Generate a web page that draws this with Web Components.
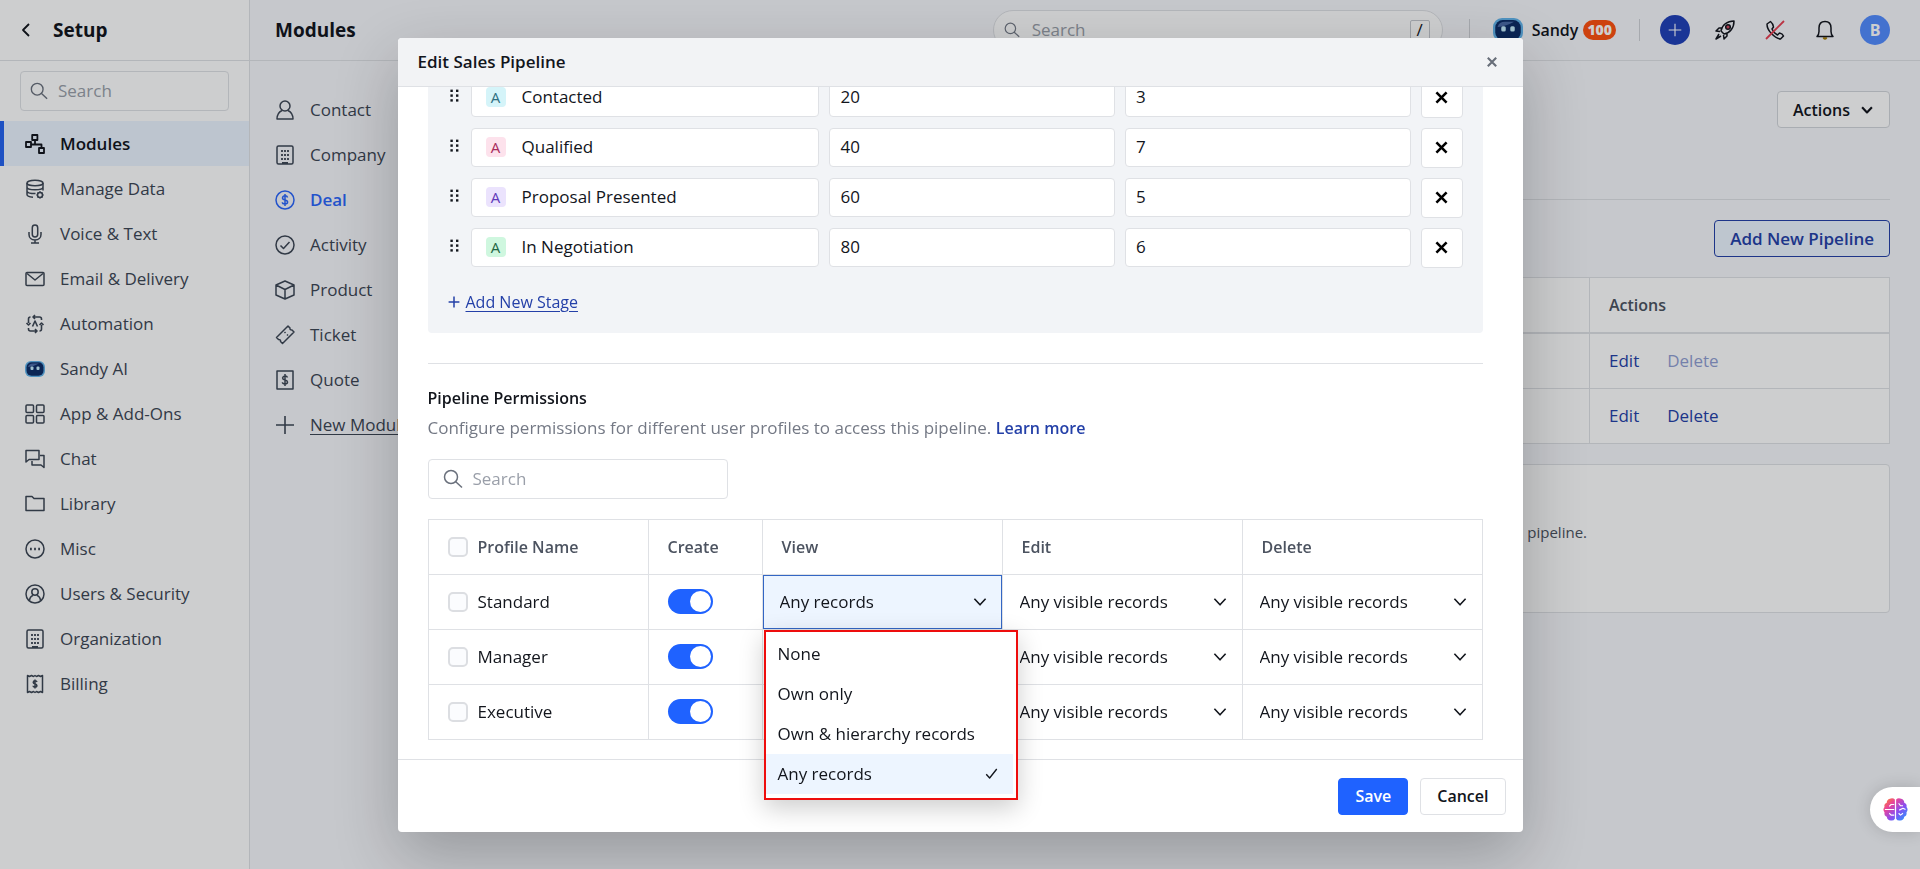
<!DOCTYPE html>
<html lang="en">
<head>
<meta charset="utf-8">
<meta name="viewport" content="width=device-width, initial-scale=1">
<title>Setup - Modules</title>
<style>
    :root {
        --line: #dfe1e5;
        --text: #12151c;
        --muted: #3d4654;
        --head: #4c5360;
        --hint: #9a9fa9;
        --link: #2440a8;
        --primary: #1f62ff;
        --tint: #edf5ff;
        --panel: #f2f4f7;
    }
    body {
        margin: 0;
        min-height: 100vh;
        overflow: hidden;
        font: 17px/24px "Open Sans", "Noto Sans", sans-serif;
        color: var(--text);
        background: #f7f8fc;
    }
</style>
</head>
<body>
<x-app>
    <x-sidebar slot="sidebar"></x-sidebar>
    <x-topbar slot="topbar" heading="Modules"></x-topbar>
    <x-modules slot="modules"></x-modules>
    <x-pipelines></x-pipelines>
</x-app>
<x-modal heading="Edit Sales Pipeline">
    <x-stages></x-stages>
    <x-permissions></x-permissions>
</x-modal>
<x-assistant></x-assistant>

<script>
const icons = {
    back: `<path d="M13 4 7 10l6 6" stroke-width="1.8"/>`,
    search: `<circle cx="8" cy="8" r="6.5"/><path d="m12.5 12.5 6.5 6"/>`,
    modules: `<path d="M7.2 1h5.2v5H7.2zM1 8h5v5H1zM14 14h5v5h-5zM10 6v4.5M6 10.5h10.5V14" stroke-width="1.8"/>`,
    data: `<ellipse cx="10" cy="4" rx="8" ry="2.8"/><path d="M2 4v11.5c0 1.5 2.5 2.5 6 2.8M18 4v7.5M2 8c0 3.7 16 3.7 16 0M2 12c0 1.8 4 2.6 8.5 2.6"/><circle cx="15" cy="16" r="2.5"/><path d="M15 12.3v1M15 18.5v1M11.5 16h1M17.5 16h1M12.5 13.5l.8.8M17.5 18.5l-.8-.8M17.5 13.5l-.8.8M12.5 18.5l.8-.8"/>`,
    mic: `<rect x="7.3" y="1" width="5.4" height="12" rx="2.7"/><path d="M4 8v2.5c0 3.3 2.5 5.5 6 5.5s6-2.2 6-5.5V8M10 16v3M6 19h8"/>`,
    mail: `<rect x="1" y="3.5" width="18" height="13" rx="1"/><path d="m2 4.5 8 6.5 8-6.5"/>`,
    automation: `<path d="M8 3h6.5q2 0 2 2v1M10 1 8 3l2 2M3.5 9V5q0-2 2-2M1.5 9l2 2 2-2M12 17H5.5q-2 0-2-2v-1M10 15l2 2-2 2M16.5 11v4q0 2-2 2M14.5 11l2-2 2 2M7.5 12.5 10 7l2.5 5.5" stroke-width="1.6"/>`,
    apps: `<rect x="1" y="1" width="7.5" height="7.5" rx="1"/><rect x="11.5" y="1" width="7.5" height="7.5" rx="1"/><rect x="1" y="11.5" width="7.5" height="7.5" rx="1"/><rect x="11.5" y="11.5" width="7.5" height="7.5" rx="1"/>`,
    chat: `<path d="M1 1.5h13v9H4L1 13zM15 6.5h4v12l-3-2.5H7v-4"/>`,
    folder: `<path d="M1 16.5v-14h6l2 2h10v12z"/>`,
    misc: `<circle cx="10" cy="10" r="9"/><path d="M5 10h1.8M9.1 10h1.8M13.2 10H15" stroke-width="2.4"/>`,
    users: `<circle cx="10" cy="10" r="9"/><circle cx="10" cy="8" r="3.2"/><path d="M4.5 16.5c.3-3 1.7-4.5 3.5-5M15.5 16.5c-.3-3-1.7-4.5-3.5-5"/>`,
    building: `<rect x="2" y="1" width="16" height="18" rx="1.5"/><path d="M7 18h6" stroke-width="2"/><path d="M7 5v10M10 5v10M13 5v10" stroke-width="1.8" stroke-dasharray="2 2"/>`,
    bill: `<path d="M2.5 1.5v17l2-1 2 1 2-1 1.5 1 1.5-1 2 1 2-1 2 1v-17l-2 1-2-1-2 1-1.5-1-1.5 1-2-1-2 1z"/><path d="M12 8q-.4-1.300-2-1.300T8.200 8.300q0 1.200 1.800 1.600t1.900 1.700q0 1.600-1.900 1.600T8 11.800M10 5.500v9"/>`,
    contact: `<circle cx="10" cy="6" r="5"/><path d="M7 10.500c-3 1.500-5 4-5 8.500h16c0-4.500-2-7-5-8.500"/>`,
    deal: `<circle cx="10" cy="10" r="9"/><path d="M12.6 7.5q-.5-1.7-2.6-1.7T7.5 7.9q0 1.5 2.5 2t2.6 2.2q0 2-2.600 2t-2.700-1.800M10 4v12"/>`,
    activity: `<circle cx="10" cy="10" r="9"/><path d="m5.5 10.5 3 3 6-6.5"/>`,
    product: `<path d="m10 1 9 4v10l-9 4-9-4V5zM1 5l9 4.5L19 5M10 9.5V19"/>`,
    ticket: `<path d="m13 1 2 2q-.5 2 2 2l2 2L7.5 18.5l-2-2q.5-2-2-2l-2-2zM9.5 7l1 1M12 9.5l1 1M14 11.5l.5.5"/>`,
    quote: `<rect x="2" y="1" width="16" height="18"/><path d="M12.5 7.5Q12 6 10 6T7.6 8q0 1.4 2.4 1.9t2.5 2.1q0 2-2.5 2t-2.6-1.7M10 4v12"/>`,
    plus: `<path d="M10 1v18M1 10h18" style="stroke-width:var(--weight, 1.6)"/>`,
    rocket: `<path d="M6 11c1-6 6-10 13-10 0 7-4 12-10 13zM7 8H4l-3 3 4 .5M12 13v3l-3 3-.5-4M4 14l-3 5 5-3M6 11l3 3"/><circle cx="13" cy="7" r="2.3" fill="#d0455c"/>`,
    phone: `<path d="M5.5 1.5 2 4q0 5 4 9 5 5.5 9.5 6l3-3q-1-2.5-4-3l-2 2q-4-2-5.5-6l1.5-2Q8 3.5 5.5 1.5z"/><path d="M19 1 1 19" stroke="#e83e50" stroke-width="1.8"/>`,
    bell: `<path d="M8.5 18q1.5 2 3 0z" fill="#e8b923" stroke="#a87d00"/><path d="M2 16.5h16q-2-2-2-5V8c0-4-2-6.5-6-6.5S4 4 4 8v3.5q0 3-2 5z"/>`,
    close: `<path d="m4 4 12 12M16 4 4 16" stroke-width="3"/>`,
    chevron: `<path d="m3 6 7 7.5L17 6" style="stroke-width:var(--weight, 2)"/>`,
    check: `<path d="m3 11 4.5 5L17 4" stroke-width="1.8"/>`,
    drag: `<g fill="currentColor" stroke="none"><rect x="3" y="2" width="3" height="3"/><rect x="10" y="2" width="3" height="3"/><rect x="3" y="8" width="3" height="3"/><rect x="10" y="8" width="3" height="3"/><rect x="3" y="14" width="3" height="3"/><rect x="10" y="14" width="3" height="3"/></g>`,
    bot: `<g stroke="none"><rect y="2" width="20" height="16" rx="6" fill="#63b5ec"/><rect x="1.5" y="3.3" width="17" height="13.4" rx="5" fill="#0d2c66"/><path d="M3 8q1-3.500 5-3.500h6q-5 3-11 3.500z" fill="#4d6ca8"/><rect x="5.5" y="7.5" width="3" height="3.5" rx="1" fill="#c9f0ff"/><rect x="11.5" y="7.5" width="3" height="3.5" rx="1" fill="#c9f0ff"/></g>`,
    brain: `<defs><linearGradient id="g" x1="0" y1="0" x2="1" y2="1"><stop offset="0" stop-color="#ff8a1f"/><stop offset=".3" stop-color="#e8449b"/><stop offset=".6" stop-color="#8a4df0"/><stop offset="1" stop-color="#1aa0ff"/></linearGradient></defs><path d="M9.5 2Q8 .3 5.5 1.3 3 2 3 4.5.5 5.5 1.2 8-.5 10 1.2 12.2.7 15 3 15.8q.5 3 3.2 3 2.3.4 3.3-1.400zM10.5 2q1.5-1.7 4-.7Q17 2 17 4.5q2.5 1 1.8 3.5 1.7 2 0 4.2.5 2.800-1.800 3.600-.5 3-3.200 3-2.300.4-3.300-1.400z" fill="url(#g)" stroke="none"/><path d="M9 6H6.500L5 7.500M1.500 10H9M5 13l1.500 1.500H9M12.500 5 14 7h2M13 10.500l3-1.500 2 1M12.500 13l1.500 1.500 2-1.500" stroke="#fff" stroke-width=".9"/>`
};

function attach(el, html) {
    el.attachShadow({ mode: "open" });
    const $template = document.createElement("template");
    $template.innerHTML = html;
    el.shadowRoot.appendChild($template.content.cloneNode(true));
}

class Icon extends HTMLElement {
    connectedCallback() {
        if (this.shadowRoot) return;
        attach(this, `
<style>
    :host {
        display: block;
        flex: none;
        width: var(--size, 20px);
        height: var(--size, 20px);
    }
    svg {
        display: block;
        width: 100%;
        height: 100%;
        overflow: visible;
    }
</style>
<svg viewBox="0 0 20 20" fill="none" stroke="currentColor" stroke-width="1.5" stroke-linejoin="round" aria-hidden="true">${icons[this.getAttribute("name")]}</svg>`);
    }
}
window.customElements.define("x-icon", Icon);

class App extends HTMLElement {
    constructor() {
        super();
        attach(this, `
<style>
    :host {
        display: grid;
        grid-template-columns: 250px 200px 1fr;
        grid-template-rows: 61px 1fr;
        min-height: 100vh;
    }
    ::slotted([slot="sidebar"]) {
        grid-row: 1 / 3;
    }
    ::slotted([slot="topbar"]) {
        grid-column: 2 / 4;
    }
</style>
<slot name="sidebar"></slot>
<slot name="topbar"></slot>
<slot name="modules"></slot>
<slot></slot>`);
    }
}
window.customElements.define("x-app", App);

class NavItem extends HTMLElement {
    connectedCallback() {
        if (this.shadowRoot) return;
        attach(this, `
<style>
    :host {
        display: block;
    }
    a {
        display: flex;
        align-items: center;
        gap: 15px;
        height: 45px;
        padding: 0 25px;
        color: var(--muted);
        text-decoration: none;
        white-space: nowrap;
    }
    :host([active]) a {
        color: var(--text);
        font-weight: 600;
        background: #ebf4ff;
        box-shadow: inset 4px 0 #2563f0;
    }
    :host([current]) a {
        color: #2b66fa;
        font-weight: 600;
    }
    :host([underline]) span {
        text-decoration: underline;
        text-underline-offset: 3px;
    }
</style>
<a href="#"><x-icon name="${this.getAttribute("icon")}"></x-icon><span><slot></slot></span></a>`);
    }
}
window.customElements.define("x-nav-item", NavItem);

class Sidebar extends HTMLElement {
    constructor() {
        super();
        attach(this, `
<style>
    :host {
        display: block;
        box-sizing: border-box;
        background: #fff;
        border-right: 1px solid var(--line);
    }
    header {
        display: flex;
        align-items: center;
        gap: 17px;
        box-sizing: border-box;
        height: 61px;
        padding: 0 16px;
        border-bottom: 1px solid var(--line);
    }
    header a {
        color: inherit;
    }
    h1 {
        margin: 0;
        font-size: 19px;
        font-weight: 700;
    }
    .search {
        display: flex;
        align-items: center;
        gap: 10px;
        height: 38px;
        margin: 10px 20px;
        padding: 0 9px;
        border: 1px solid var(--line);
        border-radius: 4px;
        color: #6a707c;
        --size: 18px;
    }
    input {
        min-width: 0;
        flex: 1;
        border: 0;
        padding: 0;
        outline: 0;
        font: inherit;
        background: none;
    }
    input::placeholder {
        color: var(--hint);
    }
</style>
<header><a href="#" aria-label="Back"><x-icon name="back"></x-icon></a><h1>Setup</h1></header>
<label class="search"><x-icon name="search"></x-icon><input type="text" placeholder="Search" aria-label="Search setup"></label>
<nav>
    <x-nav-item icon="modules" active>Modules</x-nav-item>
    <x-nav-item icon="data">Manage Data</x-nav-item>
    <x-nav-item icon="mic">Voice &amp; Text</x-nav-item>
    <x-nav-item icon="mail">Email &amp; Delivery</x-nav-item>
    <x-nav-item icon="automation">Automation</x-nav-item>
    <x-nav-item icon="bot">Sandy AI</x-nav-item>
    <x-nav-item icon="apps">App &amp; Add-Ons</x-nav-item>
    <x-nav-item icon="chat">Chat</x-nav-item>
    <x-nav-item icon="folder">Library</x-nav-item>
    <x-nav-item icon="misc">Misc</x-nav-item>
    <x-nav-item icon="users">Users &amp; Security</x-nav-item>
    <x-nav-item icon="building">Organization</x-nav-item>
    <x-nav-item icon="bill">Billing</x-nav-item>
</nav>`);
    }
}
window.customElements.define("x-sidebar", Sidebar);

class Modules extends HTMLElement {
    constructor() {
        super();
        attach(this, `
<style>
    :host {
        display: block;
        padding-top: 26px;
    }
</style>
<nav>
    <x-nav-item icon="contact">Contact</x-nav-item>
    <x-nav-item icon="building">Company</x-nav-item>
    <x-nav-item icon="deal" current>Deal</x-nav-item>
    <x-nav-item icon="activity">Activity</x-nav-item>
    <x-nav-item icon="product">Product</x-nav-item>
    <x-nav-item icon="ticket">Ticket</x-nav-item>
    <x-nav-item icon="quote">Quote</x-nav-item>
    <x-nav-item icon="plus" underline>New Module</x-nav-item>
</nav>`);
    }
}
window.customElements.define("x-modules", Modules);

class Topbar extends HTMLElement {
    constructor() {
        super();
        attach(this, `
<style>
    :host {
        display: flex;
        align-items: center;
        box-sizing: border-box;
        padding: 0 30px 0 25px;
        border-bottom: 1px solid var(--line);
    }
    h2 {
        flex: 1;
        margin: 0;
        font-size: 19px;
        font-weight: 700;
    }
    .search {
        display: flex;
        align-items: center;
        gap: 12px;
        box-sizing: border-box;
        width: 450px;
        height: 40px;
        padding: 0 12px 0 10px;
        border: 1px solid var(--line);
        border-radius: 20px;
        background: #fff;
        color: #767c88;
        --size: 16px;
    }
    input {
        min-width: 0;
        flex: 1;
        border: 0;
        padding: 0;
        outline: 0;
        font: inherit;
        background: none;
    }
    input::placeholder {
        color: var(--hint);
    }
    kbd {
        width: 18px;
        border: 1px solid #c6c9cf;
        border-radius: 2px;
        font: inherit;
        line-height: 18px;
        text-align: center;
        color: var(--text);
    }
    i {
        width: 1px;
        height: 22px;
        background: #cfd1d6;
    }
    button {
        display: flex;
        align-items: center;
        border: 0;
        padding: 0;
        color: inherit;
        font: inherit;
        background: none;
    }
    .sandy {
        margin: 0 23px;
        font-size: 16px;
        font-weight: 600;
    }
    .sandy x-icon {
        --size: 30px;
        margin-right: 9px;
    }
    b {
        margin-left: 5px;
        padding: 0 4px;
        border-radius: 10px;
        font-size: 14px;
        line-height: 20px;
        color: #fff;
        background: #ff500f;
    }
    .tools {
        display: flex;
        align-items: center;
        gap: 30px;
        margin-left: 20px;
    }
    .round {
        justify-content: center;
        width: 30px;
        height: 30px;
        border-radius: 50%;
        color: #fff;
        background: #2040b8;
        --size: 14px;
    }
    .round.me {
        font-size: 16px;
        font-weight: 700;
        background: #538cff;
    }
    .tools button:first-child {
        margin-right: -5px;
    }
    .tools button:last-child {
        margin-left: -5px;
    }
    .divide {
        margin-left: 26px;
    }
</style>
<h2></h2>
<label class="search"><x-icon name="search"></x-icon><input type="text" placeholder="Search" aria-label="Search everything"><kbd>/</kbd></label>
<i class="divide"></i>
<button class="sandy"><x-icon name="bot"></x-icon>Sandy<b>100</b></button>
<i></i>
<div class="tools">
    <button class="round" aria-label="Add"><x-icon name="plus"></x-icon></button>
    <button aria-label="What's new"><x-icon name="rocket"></x-icon></button>
    <button aria-label="Calls off"><x-icon name="phone"></x-icon></button>
    <button aria-label="Notifications"><x-icon name="bell"></x-icon></button>
    <button class="round me">B</button>
</div>`);
    }

    connectedCallback() {
        this.shadowRoot.querySelector("h2").textContent = this.getAttribute("heading");
    }
}
window.customElements.define("x-topbar", Topbar);

class Pipelines extends HTMLElement {
    constructor() {
        super();
        attach(this, `
<style>
    :host {
        display: block;
        padding: 30px 30px 0 0;
    }
    .bar {
        display: flex;
        justify-content: flex-end;
    }
    .top {
        padding-bottom: 71px;
        border-bottom: 1px solid var(--line);
    }
    .new {
        padding: 20px 0;
    }
    button {
        display: flex;
        align-items: center;
        gap: 10px;
        box-sizing: border-box;
        height: 37px;
        padding: 0 15px;
        border: 1px solid #d3d6db;
        border-radius: 4px;
        font: inherit;
        font-weight: 600;
        color: var(--text);
        background: #fff;
    }
    .top button {
        font-size: 16px;
        --size: 14px;
        --weight: 3;
    }
    .new button {
        border-color: var(--link);
        color: var(--link);
        background: var(--tint);
    }
    table {
        width: 100%;
        border-collapse: collapse;
        table-layout: fixed;
        background: #fff;
    }
    th,
    td {
        height: 54px;
        padding: 0 20px 0 19px;
        border: 1px solid var(--line);
        text-align: left;
    }
    th {
        border-bottom-width: 2px;
        font-size: 16px;
        font-weight: 600;
        color: var(--head);
    }
    th:last-child {
        width: 260px;
    }
    a {
        margin-right: 28px;
        color: var(--link);
        text-decoration: none;
    }
    a.off {
        opacity: .5;
    }
    .card {
        box-sizing: border-box;
        height: 149px;
        margin-top: 20px;
        padding: 55px 302px 0 20px;
        border: 1px solid var(--line);
        border-radius: 4px;
        background: #fff;
    }
    p {
        margin: 0;
        font-size: 15px;
        text-align: right;
        color: var(--head);
    }
</style>
<div class="bar top"><button>Actions <x-icon name="chevron"></x-icon></button></div>
<div class="bar new"><button>Add New Pipeline</button></div>
<table>
    <tr><th></th><th>Actions</th></tr>
    <tr><td></td><td><a href="#">Edit</a><a href="#" class="off">Delete</a></td></tr>
    <tr><td></td><td><a href="#">Edit</a><a href="#">Delete</a></td></tr>
</table>
<div class="card"><p>pipeline.</p></div>`);
    }
}
window.customElements.define("x-pipelines", Pipelines);

class Modal extends HTMLElement {
    constructor() {
        super();
        attach(this, `
<style>
    :host {
        position: fixed;
        inset: 0;
        display: flex;
        align-items: center;
        justify-content: center;
        background: rgba(6, 10, 16, .2);
    }
    .modal {
        display: flex;
        flex-direction: column;
        width: 90%;
        max-width: 1125px;
        max-height: calc(100% - 75px);
        border-radius: 4px;
        background: #fff;
        box-shadow: 0 24px 64px rgba(0, 0, 0, .24);
    }
    header {
        display: flex;
        align-items: center;
        justify-content: space-between;
        flex: none;
        height: 48px;
        padding: 0 24px 0 20px;
        border-bottom: 1px solid var(--line);
        border-radius: 4px 4px 0 0;
        background: #f2f3f5;
    }
    h2 {
        margin: 0;
        font-size: 17px;
        font-weight: 600;
    }
    header button {
        display: block;
        border: 0;
        padding: 0;
        color: #686e79;
        background: none;
        --size: 14px;
    }
    /* reversed so that it opens scrolled to the permissions */
    .body {
        display: flex;
        flex-direction: column-reverse;
        flex: 1;
        min-height: 0;
        padding: 0 40px 0 30px;
        overflow-y: auto;
        scrollbar-width: none;
    }
    footer {
        display: flex;
        justify-content: flex-end;
        gap: 12px;
        flex: none;
        padding: 18px 17px 17px;
        border-top: 1px solid var(--line);
    }
    footer button {
        box-sizing: border-box;
        height: 37px;
        padding: 0 16px;
        border: 1px solid var(--line);
        border-radius: 4px;
        font: inherit;
        font-size: 16px;
        font-weight: 600;
        color: var(--text);
        background: #fff;
    }
    footer .save {
        border-color: var(--primary);
        color: #fff;
        background: var(--primary);
    }
</style>
<div class="modal" role="dialog" aria-labelledby="title">
    <header><h2 id="title"></h2><button aria-label="Close"><x-icon name="close"></x-icon></button></header>
    <div class="body"><div><slot></slot></div></div>
    <footer><button class="save">Save</button><button>Cancel</button></footer>
</div>`);
    }

    connectedCallback() {
        this.shadowRoot.querySelector("h2").textContent = this.getAttribute("heading");
    }
}
window.customElements.define("x-modal", Modal);

const stages = [
    ["Contacted", 20, 3, "#d5f4f9", "#2f6f80"],
    ["Qualified", 40, 7, "#fde2ec", "#a82a5c"],
    ["Proposal Presented", 60, 5, "#ebe3fd", "#6138b8"],
    ["In Negotiation", 80, 6, "#cff7df", "#1f6644"]
];

class Stages extends HTMLElement {
    constructor() {
        super();
        attach(this, `
<style>
    :host {
        display: block;
        padding: 20px 20px 15px;
        border-radius: 4px;
        background: var(--panel);
    }
    .row {
        display: grid;
        grid-template-columns: 13px 11fr 9fr 9fr 42px;
        gap: 10px;
        margin-bottom: 10px;
    }
    .drag {
        padding-top: 10px;
        --size: 16px;
    }
    .field {
        display: flex;
        align-items: center;
        gap: 16px;
        box-sizing: border-box;
        height: 39px;
        padding: 0 10px;
        border: 1px solid var(--line);
        border-radius: 4px;
        background: #fff;
    }
    .name {
        padding-left: 14px;
    }
    .badge {
        width: 20px;
        border-radius: 4px;
        font-size: 15px;
        line-height: 20px;
        text-align: center;
    }
    input {
        min-width: 0;
        flex: 1;
        border: 0;
        padding: 0;
        outline: 0;
        font: inherit;
        color: inherit;
        background: none;
    }
    button {
        display: flex;
        align-items: center;
        justify-content: center;
        height: 40px;
        border: 1px solid var(--line);
        border-radius: 4px;
        color: #000;
        background: #fff;
        --size: 17px;
    }
    .add {
        display: flex;
        align-items: center;
        gap: 6px;
        padding: 12px 0 4px;
        font-size: 16px;
        color: var(--link);
        text-decoration: none;
        --size: 12px;
        --weight: 2.5;
    }
    .add span {
        text-decoration: underline;
        text-underline-offset: 3px;
    }
</style>
${stages.map(([name, rate, days, bg, color]) => `
<div class="row">
    <div class="drag"><x-icon name="drag"></x-icon></div>
    <div class="field name"><span class="badge" style="background:${bg};color:${color}">A</span><input type="text" value="${name}" aria-label="Stage name"></div>
    <div class="field"><input type="text" value="${rate}" aria-label="Win probability"></div>
    <div class="field"><input type="text" value="${days}" aria-label="Rotting days"></div>
    <button aria-label="Remove ${name}"><x-icon name="close"></x-icon></button>
</div>`).join("")}
<a href="#" class="add"><x-icon name="plus"></x-icon><span>Add New Stage</span></a>`);
    }
}
window.customElements.define("x-stages", Stages);

class Picker extends HTMLElement {
    connectedCallback() {
        if (this.shadowRoot) return;
        const options = this.getAttribute("options").split("|");
        const value = this.getAttribute("value");
        attach(this, `
<style>
    :host {
        display: block;
    }
    .box {
        display: grid;
        grid-template-columns: 1fr 30px;
        align-items: center;
        height: 54px;
    }
    select {
        grid-area: 1 / 1 / 2 / 3;
        box-sizing: border-box;
        width: 100%;
        height: 100%;
        padding: 0 30px 0 16px;
        border: 1px solid transparent;
        outline: 0;
        appearance: none;
        font: inherit;
        color: inherit;
        background: none;
    }
    .box x-icon {
        grid-area: 1 / 2;
        pointer-events: none;
        --size: 16px;
    }
    :host([open]) select {
        border-color: #3366c4;
        background: var(--tint);
    }
    /* no inset: it hangs right under the select, outside of the scrolled body */
    ul {
        position: absolute;
        z-index: 1;
        box-sizing: border-box;
        width: 254px;
        margin: 1px;
        padding: 2px 3px 4px 0;
        border: 2px solid #ee0d0d;
        list-style: none;
        background: #fff;
        box-shadow: 0 8px 24px rgba(0, 0, 0, .2);
    }
    li {
        display: flex;
        align-items: center;
        justify-content: space-between;
        height: 40px;
        padding: 0 14px 0 12px;
        --size: 15px;
    }
    li[aria-selected="true"] {
        background: var(--tint);
    }
</style>
<div class="box">
    <select aria-label="${this.getAttribute("label")}">
        ${options.map((o) => `<option${o === value ? " selected" : ""}>${o}</option>`).join("")}
    </select>
    <x-icon name="chevron"></x-icon>
</div>
${this.hasAttribute("open") ? `<ul role="listbox">${options.map((o) => o === value
        ? `<li role="option" aria-selected="true">${o}<x-icon name="check"></x-icon></li>`
        : `<li role="option">${o}</li>`).join("")}</ul>` : ""}`);
    }
}
window.customElements.define("x-picker", Picker);

const profiles = ["Standard", "Manager", "Executive"];
const viewOptions = "None|Own only|Own &amp; hierarchy records|Any records";

class Permissions extends HTMLElement {
    constructor() {
        super();
        attach(this, `
<style>
    :host {
        display: block;
        margin-top: 30px;
        padding: 22px 0 19px;
        border-top: 1px solid var(--line);
    }
    h3 {
        margin: 0;
        font-size: 16px;
        font-weight: 600;
    }
    p {
        margin: 6px 0 19px;
        color: #747985;
    }
    a {
        font-size: 16px;
        font-weight: 600;
        color: var(--link);
        text-decoration: none;
    }
    .search {
        display: flex;
        align-items: center;
        gap: 10px;
        box-sizing: border-box;
        max-width: 300px;
        height: 40px;
        margin-bottom: 20px;
        padding: 0 14px;
        border: 1px solid var(--line);
        border-radius: 4px;
        color: #6a707c;
    }
    .search input {
        min-width: 0;
        flex: 1;
        border: 0;
        padding: 0;
        outline: 0;
        font: inherit;
    }
    .search input::placeholder {
        color: var(--hint);
    }
    table {
        width: 100%;
        border-collapse: collapse;
        table-layout: fixed;
    }
    th,
    td {
        height: 54px;
        padding: 0;
        border: 1px solid var(--line);
        text-align: left;
    }
    th {
        font-size: 16px;
        font-weight: 600;
        color: var(--head);
    }
    th:nth-child(n + 2) {
        padding-left: 19px;
    }
    label {
        display: flex;
        align-items: center;
        gap: 10px;
        padding-left: 19px;
    }
    .tick {
        box-sizing: border-box;
        width: 20px;
        height: 20px;
        margin: 0;
        appearance: none;
        border: 2px solid #dcdee2;
        border-radius: 5px;
        background: #fbfcfe;
    }
    .switch {
        display: flex;
        box-sizing: border-box;
        width: 45px;
        height: 25px;
        margin: 0 0 0 19px;
        padding: 2px;
        appearance: none;
        border-radius: 13px;
        background: #cfd2d8;
    }
    .switch::before {
        content: "";
        width: 21px;
        height: 21px;
        border-radius: 50%;
        background: #fff;
    }
    .switch:checked {
        justify-content: flex-end;
        background: var(--primary);
    }
</style>
<h3>Pipeline Permissions</h3>
<p>Configure permissions for different user profiles to access this pipeline. <a href="#">Learn more</a></p>
<label class="search"><x-icon name="search"></x-icon><input type="text" placeholder="Search" aria-label="Search profiles"></label>
<table>
    <colgroup><col style="width:220px"><col style="width:114px"><col><col><col></colgroup>
    <tr><th><label><input type="checkbox" class="tick">Profile Name</label></th><th>Create</th><th>View</th><th>Edit</th><th>Delete</th></tr>
    ${profiles.map((name, i) => `
    <tr>
        <td><label><input type="checkbox" class="tick">${name}</label></td>
        <td><input type="checkbox" role="switch" class="switch" aria-label="${name} can create" checked></td>
        <td><x-picker label="${name} view" options="${viewOptions}" value="Any records"${i === 0 ? " open" : ""}></x-picker></td>
        <td><x-picker label="${name} edit" options="Any visible records" value="Any visible records"></x-picker></td>
        <td><x-picker label="${name} delete" options="Any visible records" value="Any visible records"></x-picker></td>
    </tr>`).join("")}
</table>`);
    }
}
window.customElements.define("x-permissions", Permissions);

class Assistant extends HTMLElement {
    constructor() {
        super();
        attach(this, `
<style>
    :host {
        position: fixed;
        right: 0;
        bottom: 37px;
    }
    button {
        display: flex;
        align-items: center;
        height: 45px;
        padding: 0 12px 0 13px;
        border: 0;
        border-radius: 23px 0 0 23px;
        background: #fff;
        box-shadow: 0 0 16px rgba(0, 0, 0, .16);
        --size: 25px;
    }
</style>
<button aria-label="Open assistant"><x-icon name="brain"></x-icon></button>`);
    }
}
window.customElements.define("x-assistant", Assistant);
</script>
</body>
</html>
